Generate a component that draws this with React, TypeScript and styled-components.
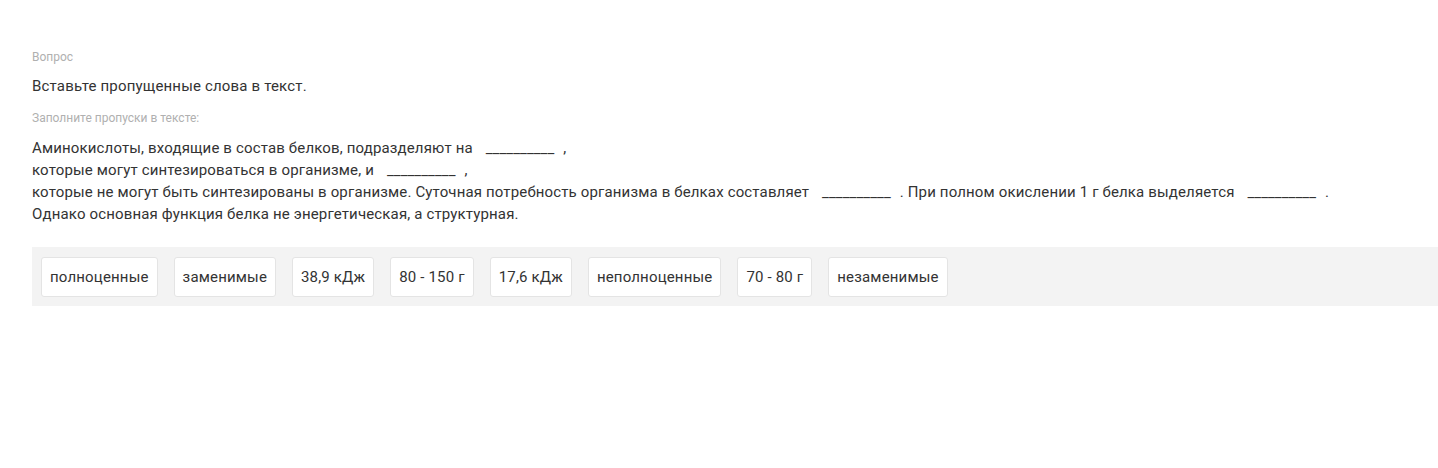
import React from "react";
import styled, { createGlobalStyle } from "styled-components";

const Global = createGlobalStyle`
  html, body { margin: 0; padding: 0; background: #fff; overflow: hidden; }
  body { font-family: Roboto, "Noto Sans", sans-serif; color: #333; }
`;

const Page = styled.div`
  padding: 49px 0 0 32px;
  width: 1500px;
`;

const Label = styled.div`
  font-size: 12px;
  line-height: 16px;
  color: #b0b0b0;
`;

const Question = styled.div`
  font-size: 15px;
  line-height: 20px;
  letter-spacing: 0.17px;
  color: #333;
  margin: 11px 0 14px;
`;

const Text = styled.div`
  font-size: 15px;
  line-height: 22px;
  letter-spacing: 0.15px;
  color: #333;
  margin-top: 11px;
`;

const Blank = styled.span`
  display: inline-block;
  margin: 0 9px 0 9px;
  letter-spacing: 0.1px;
`;

const Bank = styled.div`
  margin-top: 22px;
  background: #f3f3f3;
  box-shadow: 0 2px 1px -1px rgba(0, 0, 0, 0.16);
  display: flex;
  gap: 16px;
  padding: 10px 0 9px 9px;
`;

const Chip = styled.div`
  height: 40px;
  box-sizing: border-box;
  display: flex;
  align-items: center;
  padding: 0 8px;
  background: #fff;
  border: 1px solid #e4e4e4;
  border-radius: 3px;
  font-size: 15px;
  letter-spacing: 0.17px;
  color: #333;
  white-space: nowrap;
`;

const words = [
  "полноценные",
  "заменимые",
  "38,9 кДж",
  "80 - 150 г",
  "17,6 кДж",
  "неполноценные",
  "70 - 80 г",
  "незаменимые",
];

const B = () => <Blank>__________</Blank>;

export default function App() {
  return (
    <>
      <Global />
      <Page>
        <Label>Вопрос</Label>
        <Question>Вставьте пропущенные слова в текст.</Question>
        <Label>Заполните пропуски в тексте:</Label>
        <Text>
          Аминокислоты, входящие в состав белков, подразделяют на <B />,
          <br />
          которые могут синтезироваться в организме, и <B />,
          <br />
          которые не могут быть синтезированы в организме. Суточная потребность
          организма в белках составляет <B />. При полном окислении 1 г белка
          выделяется <B />.
          <br />
          Однако основная функция белка не энергетическая, а структурная.
        </Text>
        <Bank>
          {words.map((w) => (
            <Chip key={w}>{w}</Chip>
          ))}
        </Bank>
      </Page>
    </>
  );
}
